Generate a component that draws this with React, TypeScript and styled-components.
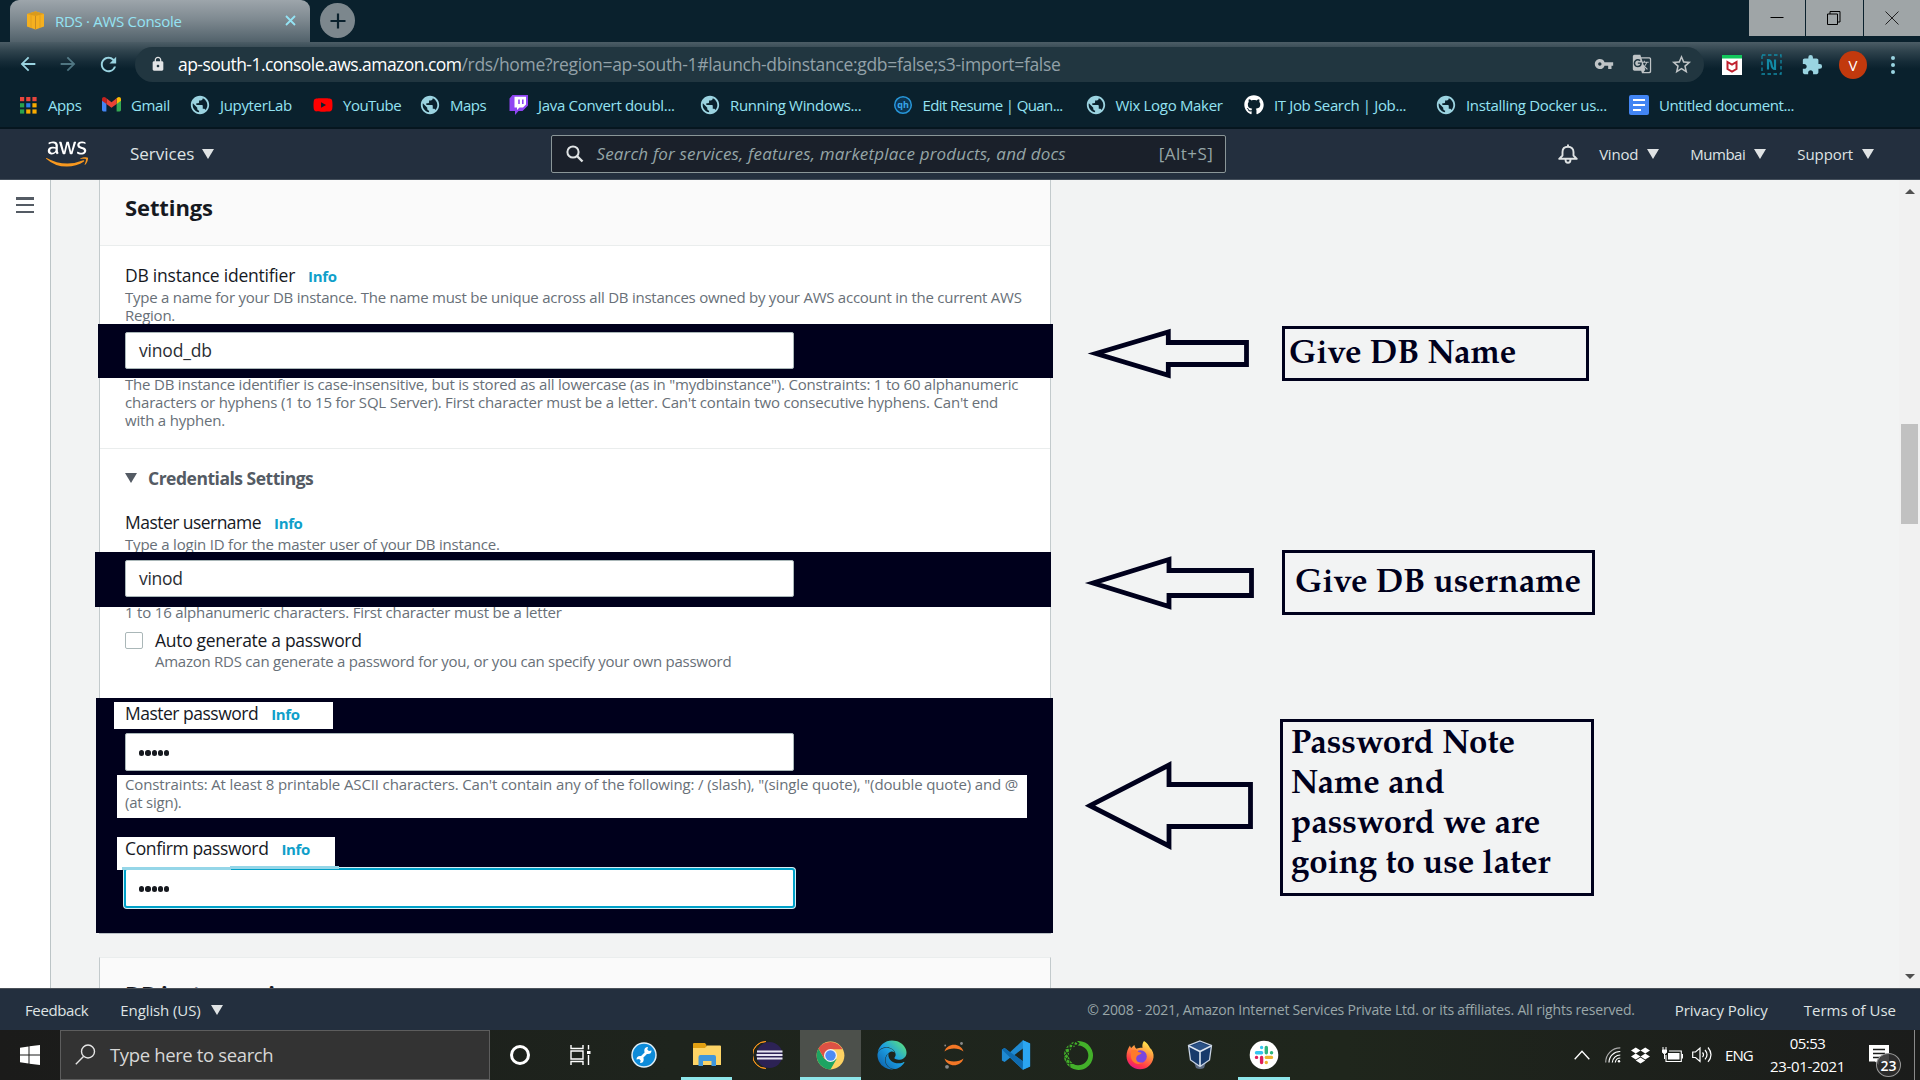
import React from "react";
import styled, { createGlobalStyle, css } from "styled-components";
import { FaAws, FaGithub, FaTwitch, FaYoutube, FaDropbox, FaEdge } from "react-icons/fa";
import { SiAnaconda } from "react-icons/si";
import {
  MdPublic, MdVpnKey, MdGTranslate, MdStarBorder, MdExtension, MdLock, MdRefresh, MdArrowBack, MdArrowForward,
} from "react-icons/md";

const INK = "#00001c";
const CYAN = "#94e3f3";

const GlobalStyle = createGlobalStyle`
  * { box-sizing: border-box; }
  body { margin: 0; overflow: hidden; }
  svg { display: block; flex: none; }
`;

const Screen = styled.div`
  width: 1920px;
  height: 1080px;
  display: flex;
  flex-direction: column;
  font-family: "Open Sans", "Noto Sans", sans-serif;
  background: #f2f3f3;
  overflow: hidden;
`;

const Txt = styled.span<{ $ls?: number; $w?: number }>`
  white-space: pre;
  letter-spacing: ${(p) => p.$ls ?? 0}px;
  ${(p) => p.$w && css`width: ${p.$w}px;`}
`;

/* ---------- browser chrome ---------- */
const TabStrip = styled.div`
  height: 42px;
  background: #0a212d;
  display: flex;
  align-items: flex-start;
  padding-left: 10px;
`;
const Tab = styled.div`
  width: 300px;
  height: 42px;
  border-radius: 9px 9px 0 0;
  background: linear-gradient(#9da5ab, #7f8a91 45%, #52626b);
  display: flex;
  align-items: center;
  padding: 0 14px 1px 16px;
  color: ${CYAN};
  font-size: 15px;
`;
const TabTitle = styled(Txt)`
  margin-left: 10px;
  flex: 1;
`;
const NewTab = styled.div`
  width: 35px;
  height: 35px;
  margin: 3px 0 0 10px;
  border-radius: 50%;
  background: #7c878d;
  display: grid;
  place-items: center;
`;
const WindowButtons = styled.div`
  margin-left: auto;
  display: flex;
  gap: 1px;
`;
const WindowButton = styled.div`
  width: 56.4px;
  height: 36px;
  background: #9fa5a7;
  display: grid;
  place-items: center;
`;
const Toolbar = styled.div`
  height: 43px;
  background: linear-gradient(#4c5d66, #2f434d 9px, #152b37 20px, #0a212d 27px);
  display: flex;
  align-items: center;
  padding: 0 0 1px 17px;
  color: #9ad4e1;
`;
const NavButton = styled.div<{ $dim?: boolean }>`
  width: 40px;
  display: flex;
  padding-top: 2px;
  opacity: ${(p) => (p.$dim ? 0.45 : 1)};
`;
const AddressBar = styled.div`
  width: 1569px;
  height: 35px;
  margin: 2px 17px 0 -2px;
  border-radius: 18px;
  background: #213640;
  display: flex;
  align-items: center;
  padding: 0 11px 0 15px;
  font-size: 17.5px;
  color: #93a1a8;
`;
const Host = styled(Txt)`
  color: #fff;
  margin-left: 12px;
  width: 283.5px;
`;
const Path = styled(Txt)`
  flex: 1;
`;
const AddressIcons = styled.div`
  display: flex;
  align-items: center;
  gap: 18px;
  color: #bfc4c6;
`;
const Extensions = styled.div`
  display: flex;
  align-items: center;
  gap: 19px;
  padding: 3px 0 0 1px;
`;
const Avatar = styled.div`
  width: 28px;
  height: 28px;
  border-radius: 50%;
  background: #c2390d;
  color: #fff;
  font-size: 15px;
  display: grid;
  place-items: center;
  margin: 0 -3px 0 -3px;
`;
const BookmarkBar = styled.div`
  height: 44px;
  background: #0a212d;
  border-bottom: 2px solid #06161f;
  display: flex;
  align-items: center;
  padding: 0 0 3px 18px;
  color: ${CYAN};
  font-size: 15px;
`;
const Bookmark = styled.div<{ $w: number }>`
  width: ${(p) => p.$w}px;
  display: grid;
  grid-template-columns: 20px auto;
  column-gap: 10px;
  align-items: center;
  justify-items: center;
  justify-content: start;
`;
const Globe = styled(MdPublic)`
  width: 22px;
  height: 22px;
  color: #9bd3e0;
`;

/* ---------- AWS header ---------- */
const AwsHeader = styled.header`
  height: 51px;
  background: #232f3e;
  border-bottom: 1px solid #444f5b;
  display: flex;
  align-items: center;
  padding: 0 46px;
  color: #dfe3e4;
`;
const AwsLogo = styled.div`
  display: grid;
  margin-right: 42px;
  > * { grid-area: 1 / 1; width: 42px; height: 34px; }
`;
const LogoWord = styled(FaAws)`
  color: #fff;
  clip-path: inset(0 0 43% 0);
`;
const LogoSmile = styled(FaAws)`
  color: #f7981f;
  clip-path: inset(57% 0 0 0);
`;
const Menu = styled.div<{ $size?: number; $gap?: number }>`
  display: flex;
  align-items: center;
  gap: ${(p) => p.$gap ?? 9}px;
  font-size: ${(p) => p.$size ?? 15}px;
`;
const ServicesMenu = styled(Menu)`
  padding-bottom: 1px;
`;
const Caret = styled.i<{ $color?: string }>`
  border: 6.5px solid transparent;
  border-top: 10.5px solid ${(p) => p.$color ?? "#dfe3e4"};
  border-bottom: 0;
`;
const SearchBox = styled.div`
  width: 675px;
  height: 38px;
  margin-left: 337px;
  border: 1px solid #8a9698;
  border-radius: 2px;
  background: #1a202a;
  color: #95a5a6;
  font-size: 17px;
  display: flex;
  align-items: center;
  padding: 0 12px 1px 14px;
`;
const Placeholder = styled(Txt)`
  font-style: italic;
  margin-left: 12px;
  flex: 1;
`;
const HeaderRight = styled.div`
  margin-left: auto;
  display: flex;
  align-items: center;
  gap: 31px;
  > :first-child { margin-right: -10px; }
`;

/* ---------- page ---------- */
const Page = styled.main`
  position: relative;
  height: 808px;
  display: flex;
  overflow: hidden;
`;
const SideRail = styled.aside`
  width: 51px;
  background: #fff;
  border-right: 1px solid #bcc4c6;
  padding: 17px 0 0 16px;
`;
const Burger = styled.div`
  width: 18px;
  height: 16px;
  display: flex;
  flex-direction: column;
  justify-content: space-between;
  > i { height: 2.5px; background: #545b64; }
`;
const Column = styled.div`
  width: 952px;
  margin-left: 48px;
`;
const Card = styled.section<{ $top?: boolean }>`
  background: #fff;
  border: 1px solid #c3cacc;
  border-top: ${(p) => (p.$top ? "1px solid #eaeded" : "0")};
  border-bottom-color: #b8bfc3;
  margin-top: ${(p) => (p.$top ? 23 : 0)}px;
`;
const CardHeader = styled.div<{ $pad: number }>`
  height: 66px;
  background: #fafafa;
  border-bottom: 1px solid #eaeded;
  padding: ${(p) => p.$pad}px 25px 0;
  font-size: 22px;
  font-weight: 700;
  line-height: 28px;
  color: #16191f;
`;
const Section = styled.div<{ $pad: number; $line?: boolean }>`
  padding: ${(p) => p.$pad}px 25px ${(p) => (p.$line ? 19 : 0)}px;
  border-bottom: ${(p) => (p.$line ? "1px solid #eaeded" : "0")};
`;
const Label = styled.div<{ $mt?: number }>`
  height: 22px;
  margin-top: ${(p) => p.$mt ?? 0}px;
  font-size: 17.5px;
  line-height: 22px;
  color: #16191f;
  display: flex;
  align-items: baseline;
`;
const Info = styled(Txt)`
  font-size: 15px;
  font-weight: 700;
  color: #0f9fca;
  margin-left: 13px;
`;
const Help = styled.div<{ $mt?: number; $ml?: number }>`
  margin: ${(p) => p.$mt ?? 2}px 0 0 ${(p) => p.$ml ?? 0}px;
  font-size: 15px;
  line-height: 18px;
  color: #687078;
  display: flex;
  flex-direction: column;
`;
const Band = styled.div<{ $l: number; $r: number; $h: number; $mt?: number }>`
  position: relative;
  height: ${(p) => p.$h}px;
  margin: ${(p) => p.$mt ?? 0}px ${(p) => -25 - p.$r}px 0 ${(p) => -25 - p.$l}px;
  padding: 8px 0 0 ${(p) => 25 + p.$l}px;
  background: ${INK};
`;
const Field = styled.div<{ $h?: number; $mt?: number }>`
  width: 669px;
  height: ${(p) => p.$h ?? 37}px;
  margin-top: ${(p) => p.$mt ?? 0}px;
  padding: 0 0 2px 13px;
  border: 1px solid #aab7b8;
  border-radius: 2px;
  background: #fff;
  color: #2b2e33;
  font-size: 17.5px;
  display: flex;
  align-items: center;
`;
const FocusedField = styled(Field)`
  width: 671px;
  margin-left: -1px;
  border: 2px solid #00a1c9;
  box-shadow: 0 0 0 1px #d5eff6;
  border-radius: 3px;
`;
const Dots = styled.div`
  display: flex;
  gap: 1px;
  padding-top: 4px;
  > i { width: 5.3px; height: 5.3px; border-radius: 50%; background: #16191f; }
`;
const Patch = styled.div<{ $w: number; $h: number; $x: number; $mt?: number }>`
  width: ${(p) => p.$w}px;
  height: ${(p) => p.$h}px;
  margin: ${(p) => p.$mt ?? 0}px 0 0 ${(p) => -p.$x}px;
  padding-left: ${(p) => p.$x}px;
  background: #fff;
`;
const Strip = styled.div<{ $x: number; $y: number }>`
  position: absolute;
  left: ${(p) => p.$x}px;
  top: ${(p) => p.$y}px;
  width: 109px;
  height: 3px;
  background: #95d6e8;
`;
const Subhead = styled.div`
  display: flex;
  align-items: center;
  gap: 11px;
  height: 22px;
  font-size: 17.5px;
  line-height: 21px;
  font-weight: 700;
  color: #545b64;
`;
const CheckRow = styled.div`
  display: flex;
  align-items: center;
  gap: 12px;
  height: 22px;
  margin-top: 8px;
  font-size: 17.5px;
  line-height: 22px;
  color: #16191f;
`;
const CheckBox = styled.div`
  width: 18px;
  height: 17px;
  border: 1px solid #aab7b8;
  border-radius: 2px;
`;

const ScrollBar = styled.div`
  width: 21px;
  height: 100%;
  margin-left: auto;
  background: #f1f1f1;
  display: flex;
  flex-direction: column;
  align-items: center;
  justify-content: space-between;
  padding: 9px 0;
`;
const Thumb = styled.div`
  width: 17px;
  height: 100px;
  margin: -220px 0 0;
  background: #c1c1c1;
`;
const ArrowUp = styled.i`
  border: 5px solid transparent;
  border-bottom-color: #505050;
  border-top: 0;
`;
const ArrowDown = styled.i`
  border: 5px solid transparent;
  border-top-color: #505050;
  border-bottom: 0;
`;

/* Hand-drawn notes that float above the page */
const ArrowLayer = styled.svg`
  position: absolute;
  left: 1051px;
  top: 0;
`;
const Note = styled.div<{ $x: number; $y: number; $w: number; $h: number; $px: number; $py: number }>`
  position: absolute;
  left: ${(p) => p.$x}px;
  top: ${(p) => p.$y}px;
  width: ${(p) => p.$w}px;
  height: ${(p) => p.$h}px;
  padding: ${(p) => p.$py}px 0 0 ${(p) => p.$px}px;
  border: 3px solid ${INK};
  color: ${INK};
  font: 700 33px/40px "TeX Gyre Pagella", "Palatino Linotype", "Liberation Serif", serif;
  white-space: pre;
`;

/* ---------- AWS footer ---------- */
const Footer = styled.footer`
  height: 42px;
  background: #232f3e;
  border-top: 1px solid #4a5058;
  display: flex;
  align-items: center;
  padding: 0 24px 0 25px;
  color: #dfe3e4;
  font-size: 15px;
`;
const Language = styled(Menu)`
  margin-left: 32px;
`;
const Copyright = styled(Txt)`
  margin-left: auto;
  margin-right: 40px;
  font-size: 14px;
  color: #9aa7a9;
`;
const Terms = styled(Txt)`
  margin-left: 36px;
`;

/* ---------- taskbar ---------- */
const Taskbar = styled.div`
  height: 50px;
  display: flex;
  color: #fff;
  background: linear-gradient(90deg, #1b1b1a, #1e241d 35%, #1f261c 70%, #1b1c1b);
`;
const TaskCell = styled.div<{ $w?: number; $active?: boolean }>`
  width: ${(p) => p.$w ?? 62}px;
  display: grid;
  place-items: center;
  background: ${(p) => (p.$active ? "#4c504b" : "transparent")};
`;
const RunningCell = styled(TaskCell)<{ $inset: number }>`
  background-image: linear-gradient(#8ee6ea, #8ee6ea);
  background-size: calc(100% - ${(p) => p.$inset * 2}px) 3px;
  background-position: center bottom;
  background-repeat: no-repeat;
  background-color: ${(p) => (p.$active ? "#4c504b" : "transparent")};
`;
const TaskSearch = styled.div`
  width: 430px;
  background: #333;
  border: 1px solid #5d5d5d;
  display: flex;
  align-items: center;
  gap: 14px;
  padding: 0 0 2px 14px;
  font-size: 18.5px;
  color: #d7d7d7;
`;
const Cortana = styled.div`
  width: 20px;
  height: 20px;
  border: 3px solid #fff;
  border-radius: 50%;
`;
const Tray = styled.div`
  margin-left: auto;
  display: flex;
  align-items: center;
  font-size: 15px;
`;
const TrayCell = styled.div<{ $w: number }>`
  width: ${(p) => p.$w}px;
  display: flex;
`;
const Clock = styled.div`
  width: 75px;
  height: 50px;
  display: flex;
  flex-direction: column;
  align-items: center;
  line-height: 23px;
  padding-top: 2px;
`;
const Notice = styled.div`
  position: relative;
  width: 45px;
  height: 50px;
  margin-left: 24px;
  padding-top: 15px;
`;
const Badge = styled.div`
  position: absolute;
  left: 7px;
  top: 23px;
  width: 25px;
  height: 24px;
  border: 1.5px solid #9a9a9a;
  border-radius: 50%;
  background: rgba(45, 45, 45, 0.88);
  display: grid;
  place-items: center;
  font-size: 14px;
  font-weight: 600;
`;
const PeekLine = styled.div`
  width: 6px;
  height: 50px;
  border-left: 1px solid #8a8a8a;
`;

const EdgeIcon = styled(FaEdge)`
  width: 30px;
  height: 30px;
  path { fill: url(#edgeFill); }
`;

const AppsGrid = () => (
  <svg width="18" height="18" viewBox="0 0 18 18">
    {["#e8453c", "#e8453c", "#e8453c", "#2ba24c", "#2b7de9", "#f9ab00", "#2ba24c", "#f9ab00", "#f9ab00"].map((c, i) => (
      <rect key={i} x={1 + (i % 3) * 6.2} y={1 + Math.floor(i / 3) * 6.2} width="4.2" height="4.2" fill={c} />
    ))}
  </svg>
);
const Gmail = () => (
  <svg width="19" height="15" viewBox="0 0 19 15">
    <path d="M0 2.5V13a1.4 1.4 0 0 0 1.4 1.4H4.4V6z" fill="#4285f4" />
    <path d="M19 2.5V13a1.4 1.4 0 0 1-1.4 1.4H14.6V6z" fill="#34a853" />
    <path d="M14.6 1.5V7L19 3.7V2.2C19 .4 17-.6 15.5.6z" fill="#fbbc04" />
    <path d="M4.4 7V1.3l5.1 3.9 5.1-3.9V7L9.5 10.8z" fill="#ea4335" />
    <path d="M0 2.2V3.7L4.4 7V1.3L3.5.6C2-.6 0 .4 0 2.2z" fill="#c5221f" />
  </svg>
);
const Cube = () => (
  <svg width="19" height="19" viewBox="0 0 19 19">
    <path d="M9.5.3 18 3v12.5L9.5 18.6 1 15.500V3z" fill="#f5b01f" />
    <path d="M1.200 3 9.500 5 17.800 3 9.500.4z" fill="#d99a1c" />
    <path d="M9.500 5V18.600" stroke="#c98a20" strokeWidth="1" />
    <path d="M5 4V17M14 4V17" stroke="#dc9c20" strokeWidth=".8" />
  </svg>
);
const Quan = () => (
  <svg width="20" height="20" viewBox="0 0 20 20">
    <circle cx="10" cy="10" r="8.300" fill="#0c3552" stroke="#2796d8" strokeWidth="1.500" />
    <text x="10" y="13" fontSize="9" fontWeight="700" textAnchor="middle" fill="#38a8ea" fontFamily="Open Sans">qh</text>
  </svg>
);
const Twitch = () => (
  <svg width="19" height="20" viewBox="0 0 19 20">
    <path d="M3.500 0H19V10.500L13.500 16H9.500L6 20V16H0.500V3.500z" fill="#8f45f2" />
    <path d="M5.500 1.800H17V9.500L14 12.500H10.500L8 15V12.500H5.500z" fill="#fff" />
    <path d="M10 4.500V9M13.800 4.500V9" stroke="#8f45f2" strokeWidth="1.600" />
  </svg>
);
const DocIcon = () => (
  <svg width="20" height="20" viewBox="0 0 20 20">
    <rect width="20" height="20" rx="2" fill="#4285f4" />
    <path d="M4 5h12M4 10h12M4 15h8" stroke="#fff" strokeWidth="2.200" />
  </svg>
);
const Chrome = () => (
  <svg width="29" height="29" viewBox="0 0 48 48">
    <circle cx="24" cy="24" r="23" fill="#fdd262" />
    <path d="M4.100 12.500A23 23 0 0 0 24 47L34 29.800 24 24 14 29.800z" fill="#1da462" />
    <path d="M24 13.500H43.900a23 23 0 0 0-39.800-1L14 29.800z" fill="#dd5144" />
    <circle cx="24" cy="24" r="10.800" fill="#f1f1f1" />
    <circle cx="24" cy="24" r="8.600" fill="#4c8bf5" />
  </svg>
);
const Explorer = () => (
  <svg width="28" height="24" viewBox="0 0 28 24">
    <path d="M0 1a1 1 0 0 1 1-1H12l1.500 2V8H0z" fill="#e2a012" />
    <path d="M0 5H12l2-2.500H27a1 1 0 0 1 1 1V22H0z" fill="#fdd466" />
    <path d="M5.500 23V14a2 2 0 0 1 2-2h13.500a2 2 0 0 1 2 2V23H18.500V18H10V23z" fill="#3f97dc" />
  </svg>
);
const Eclipse = () => (
  <svg width="30" height="28" viewBox="0 0 30 28">
    <path d="M13 .500A13.500 13.500 0 0 0 13 27.500A13.500 13.500 0 0 1 13 .500z" fill="#f7941e" stroke="#f7941e" />
    <circle cx="16.500" cy="14" r="13" fill="#2c2255" />
    <path d="M4 10.500H29.500M3.500 14H29.500M4 17.500H29.500" stroke="#e8e6f2" strokeWidth="2" />
  </svg>
);
const Wrench = () => (
  <svg width="26" height="26" viewBox="0 0 26 26">
    <circle cx="13" cy="13" r="12" fill="#0d8bd9" stroke="#dfeef7" strokeWidth="1.500" />
    <path d="M9.500 16.500 16.500 9.500" stroke="#fff" strokeWidth="2.600" />
    <path d="M20.500 8.500a3.600 3.600 0 1 1-3.500-3.600L16.300 7.500l1.600 1.600zM5.500 17.500a3.600 3.600 0 1 1 3.500 3.600l.700-2.600-1.600-1.600z" fill="#fff" />
  </svg>
);
const Jupyter = () => (
  <svg width="22" height="28" viewBox="0 0 22 28">
    <path d="M1.500 10.500C4 1.500 18 1.500 20.500 10.500 16 6.500 6 6.500 1.500 10.500z" fill="#f37726" />
    <path d="M1.500 17.500C4 26.500 18 26.500 20.500 17.500 16 21.500 6 21.500 1.500 17.500z" fill="#f37726" />
    <circle cx="18.500" cy="2.500" r="1.400" fill="#8a8a8a" />
    <circle cx="2.200" cy="4.500" r="0.900" fill="#8a8a8a" />
    <circle cx="4" cy="25.800" r="1.900" fill="#8a8a8a" />
  </svg>
);
const VsCode = () => (
  <svg width="30" height="30" viewBox="0 0 100 100">
    <path d="M73 1 97 12V88L73 99 30 59 12 73 3 68V32L12 27 30 41zM73 28 45 50 73 72z" fill="#1f8ad2" fillRule="evenodd" />
    <path d="M12 27 3 32 72 98 75 72z" fill="#0f6bb0" />
    <path d="M73 1 97 12V88L73 99z" fill="#2ba6f2" />
  </svg>
);
const Firefox = () => (
  <svg width="30" height="30" viewBox="0 0 30 30">
    <path d="M19 1C22 3 24 5.500 25 8 27.500 10 29 14 28.500 17.500 27.500 24.500 22 29.300 15 29.300 7.500 29.300 1.500 23.500 1.500 16 1.500 12 3 8 5 5.500 5.200 6.800 5.600 7.500 6.300 8 7.500 6.500 8.500 5.500 9.500 5 9.500 6.500 10.200 7.800 11.500 8.800 14 8 16.500 7.500 17.500 8 17 5 17.500 3 19 1z" fill="url(#foxFill)" />
    <circle cx="15.500" cy="16.500" r="6.300" fill="#7a46e0" />
    <path d="M6 10.500C9 9 12 10 13.500 12 15 12.500 16 12.300 16.500 13 15.500 15 12.500 14.500 11.500 17 10 21 14 23.500 17.500 22.500 13 26 6.500 22.500 6 17z" fill="#ff7a2b" />
  </svg>
);
const VBox = () => (
  <svg width="26" height="30" viewBox="0 0 26 30">
    <path d="M7 22h12l-2 6q-4 2-8 0z" fill="#5c6a80" />
    <path d="M13 1 24.500 5.500 22.500 20 13 26.500 3.500 20 1.500 5.500z" fill="#173a6b" stroke="#c9d4e4" strokeWidth="1.300" />
    <path d="M13 2.500 22 6 13 10.500 4 6z" fill="#2b5286" />
    <path d="M2 6 13 11.500 24 6M13 11.500V26" stroke="#dde6f1" strokeWidth="1.600" fill="none" />
  </svg>
);
const Slack = () => (
  <svg width="30" height="30" viewBox="0 0 30 30">
    <circle cx="15" cy="15" r="14.300" fill="#fff" />
    <g strokeWidth="3.400" strokeLinecap="round">
      <path d="M12.600 7.500V7.600M7.500 12.700H12.600" stroke="#36c5f0" />
      <path d="M17.300 7.500V12.700M22.500 12.700H22.600" stroke="#2eb67d" />
      <path d="M17.300 22.600V22.500M17.300 17.400H22.500" stroke="#ecb22e" />
      <path d="M12.600 17.400V22.600M7.500 17.400H7.600" stroke="#e01e5a" />
    </g>
  </svg>
);

const bookmarks: { w: number; t: string; ls: number; icon: React.ReactNode }[] = [
  { w: 83, t: "Apps", ls: -0.4, icon: <AppsGrid /> },
  { w: 89, t: "Gmail", ls: -0.35, icon: <Gmail /> },
  { w: 123, t: "JupyterLab", ls: -0.34, icon: <Globe /> },
  { w: 107, t: "YouTube", ls: -0.5, icon: <FaYoutube size={20} color="#f00" /> },
  { w: 88, t: "Maps", ls: -0.5, icon: <Globe /> },
  { w: 192, t: "Java Convert doubl...", ls: -0.311, icon: <Twitch /> },
  { w: 192.500, t: "Running Windows...", ls: -0.345, icon: <Globe /> },
  { w: 193, t: "Edit Resume | Quan...", ls: -0.62, icon: <Quan /> },
  { w: 158.500, t: "Wix Logo Maker", ls: -0.32, icon: <Globe /> },
  { w: 192, t: "IT Job Search | Job...", ls: -0.36, icon: <FaGithub size={20} color="#fff" /> },
  { w: 193, t: "Installing Docker us...", ls: -0.33, icon: <Globe /> },
  { w: 180, t: "Untitled document...", ls: -0.408, icon: <DocIcon /> },
];

const Gradients = () => (
  <svg width="0" height="0">
    <defs>
      <linearGradient id="edgeFill" x1="0" y1="1" x2="1" y2="0">
        <stop offset="0" stopColor="#0c59a4" /><stop offset=".5" stopColor="#1b9de2" /><stop offset="1" stopColor="#66eb6e" />
      </linearGradient>
      <linearGradient id="foxFill" x1="0.800" y1="0" x2="0.300" y2="1">
        <stop offset="0" stopColor="#fff44f" /><stop offset=".4" stopColor="#ff9640" /><stop offset=".8" stopColor="#ff3647" /><stop offset="1" stopColor="#e31587" />
      </linearGradient>
    </defs>
  </svg>
);

const PasswordDots = () => <Dots><i /><i /><i /><i /><i /></Dots>;

export default function App() {
  return (
    <Screen>
      <GlobalStyle />
      <TabStrip>
        <Tab>
          <Cube />
          <TabTitle $ls={-0.3}>RDS · AWS Console</TabTitle>
          <svg width="11" height="11" viewBox="0 0 11 11"><path d="M1 1 10 10M10 1 1 10" stroke={CYAN} strokeWidth="1.800" /></svg>
        </Tab>
        <NewTab>
          <svg width="16" height="16" viewBox="0 0 16 16"><path d="M8 .500V15.500M.500 8H15.500" stroke="#0a212d" strokeWidth="2.200" /></svg>
        </NewTab>
        <WindowButtons>
          <WindowButton><svg width="14" height="12" viewBox="0 0 14 12"><path d="M.500 5.500H13.500" stroke="#000" /></svg></WindowButton>
          <WindowButton><svg width="14" height="14" viewBox="0 0 14 14"><path d="M.500 3H10.500V13.500H.500zM3 3V.500H13V11H10.500" stroke="#000" fill="none" /></svg></WindowButton>
          <WindowButton><svg width="14" height="14" viewBox="0 0 14 14"><path d="M.500.500 13.500 13.500M13.500.500.500 13.500" stroke="#222" /></svg></WindowButton>
        </WindowButtons>
      </TabStrip>
      <Toolbar>
        <NavButton><MdArrowBack size={22} /></NavButton>
        <NavButton $dim><MdArrowForward size={22} /></NavButton>
        <NavButton><MdRefresh size={23} /></NavButton>
        <AddressBar>
          <MdLock size={16} color="#e3e5e6" />
          <Host $ls={-0.538}>ap-south-1.console.aws.amazon.com</Host>
          <Path $ls={-0.317}>/rds/home?region=ap-south-1#launch-dbinstance:gdb=false;s3-import=false</Path>
          <AddressIcons>
            <MdVpnKey size={20} />
            <MdGTranslate size={20} />
            <MdStarBorder size={23} />
          </AddressIcons>
        </AddressBar>
        <Extensions>
          <svg width="20" height="20" viewBox="0 0 20 20">
            <rect width="20" height="20" fill="#fff" /><rect width="20" height="3.500" fill="#12c75c" />
            <path d="M5.500 7 10 9.500 14.500 7V14L10 16.500 5.500 14z" fill="none" stroke="#c0202e" strokeWidth="2" />
          </svg>
          <svg width="21" height="21" viewBox="0 0 21 21">
            <rect x="1" y="1" width="19" height="19" fill="none" stroke="#128aa5" strokeWidth="1.300" strokeDasharray="3.500 2.500" />
            <path d="M7 15.500V6q3 0 3.500 4.500T14 15V5.500" fill="none" stroke="#128aa5" strokeWidth="2.200" />
          </svg>
          <MdExtension size={22} />
          <Avatar>V</Avatar>
          <svg width="20" height="18" viewBox="0 0 20 18"><circle cx="10" cy="2" r="2" fill="#9ad4e1" /><circle cx="10" cy="9" r="2" fill="#9ad4e1" /><circle cx="10" cy="16" r="2" fill="#9ad4e1" /></svg>
        </Extensions>
      </Toolbar>
      <BookmarkBar>
        {bookmarks.map((b) => (
          <Bookmark key={b.t} $w={b.w}>{b.icon}<Txt $ls={b.ls}>{b.t}</Txt></Bookmark>
        ))}
      </BookmarkBar>

      <AwsHeader>
        <AwsLogo><LogoWord /><LogoSmile /></AwsLogo>
        <ServicesMenu $size={17} $gap={8}><Txt>Services</Txt><Caret /></ServicesMenu>
        <SearchBox>
          <svg width="18" height="18" viewBox="0 0 18 18"><circle cx="7" cy="7" r="5.600" fill="none" stroke="#dfe3e4" strokeWidth="2" /><path d="M11 11 16.500 16.500" stroke="#dfe3e4" strokeWidth="2.400" /></svg>
          <Placeholder $ls={0.173}>Search for services, features, marketplace products, and docs</Placeholder>
          <Txt $ls={0.5}>[Alt+S]</Txt>
        </SearchBox>
        <HeaderRight>
          <svg width="20" height="20" viewBox="0 0 20 20"><path d="M1.200 14.800H18.800L15.500 11.500V8C15.500 5 13.500 2.800 10 2.800S4.500 5 4.500 8V11.500zM10 2.800V.500M7.500 15.500q0 3.300 2.500 3.300t2.500-3.300" fill="none" stroke="#dfe3e4" strokeWidth="1.900" strokeLinejoin="round" /></svg>
          <Menu><Txt $ls={-0.2}>Vinod</Txt><Caret /></Menu>
          <Menu><Txt $ls={-0.48}>Mumbai</Txt><Caret /></Menu>
          <Menu><Txt $ls={-0.08}>Support</Txt><Caret /></Menu>
        </HeaderRight>
      </AwsHeader>

      <Page>
        <SideRail><Burger><i /><i /><i /></Burger></SideRail>
        <Column>
          <Card>
            <CardHeader $pad={13}><Txt $ls={-0.1}>Settings</Txt></CardHeader>
            <Section $pad={18} $line>
              <Label><Txt $ls={-0.23}>DB instance identifier</Txt><Info $ls={-0.35}>Info</Info></Label>
              <Help>
                <Txt $ls={-0.245}>Type a name for your DB instance. The name must be unique across all DB instances owned by your AWS account in the current AWS</Txt>
                <Txt $ls={-0.25}>Region.</Txt>
              </Help>
              <Band $l={2} $r={3} $h={54}><Field><Txt $ls={-0.176}>vinod_db</Txt></Field></Band>
              <Help $mt={-3}>
                <Txt $ls={-0.2}>The DB instance identifier is case-insensitive, but is stored as all lowercase (as in "mydbinstance"). Constraints: 1 to 60 alphanumeric</Txt>
                <Txt $ls={-0.188}>characters or hyphens (1 to 15 for SQL Server). First character must be a letter. Can't contain two consecutive hyphens. Can't end</Txt>
                <Txt $ls={-0.2}>with a hyphen.</Txt>
              </Help>
            </Section>
            <Section $pad={18}>
              <Subhead><Caret $color="#545b64" /><Txt $ls={-0.487}>Credentials Settings</Txt></Subhead>
              <Label $mt={22}><Txt $ls={-0.54}>Master username</Txt><Info $ls={-0.35}>Info</Info></Label>
              <Help><Txt $ls={-0.2}>Type a login ID for the master user of your DB instance.</Txt></Help>
              <Band $l={5} $r={1} $h={55} $mt={-1}><Field><Txt $ls={-0.3}>vinod</Txt></Field></Band>
              <Help $mt={-4}><Txt $ls={-0.18}>1 to 16 alphanumeric characters. First character must be a letter</Txt></Help>
              <CheckRow><CheckBox /><Txt $ls={-0.3}>Auto generate a password</Txt></CheckRow>
              <Help $mt={1} $ml={30}><Txt $ls={-0.25}>Amazon RDS can generate a password for you, or you can specify your own password</Txt></Help>
              <Band $l={4} $r={3} $h={235} $mt={28}>
                <Patch $w={219} $h={27} $x={11} $mt={-4}>
                  <Label><Txt $ls={-0.5}>Master password</Txt><Info $ls={-0.35}>Info</Info></Label>
                </Patch>
                <Field $h={38} $mt={4}><PasswordDots /></Field>
                <Patch $w={910} $h={43} $x={8} $mt={4}>
                  <Help>
                    <Txt $ls={-0.13}>Constraints: At least 8 printable ASCII characters. Can't contain any of the following: / (slash), "(single quote), "(double quote) and @</Txt>
                    <Txt $ls={-0.22}>(at sign).</Txt>
                  </Help>
                </Patch>
                <Patch $w={218} $h={33} $x={8} $mt={19}>
                  <Label><Txt $ls={-0.38}>Confirm password</Txt><Info $ls={-0.35}>Info</Info></Label>
                </Patch>
                <FocusedField $h={40} $mt={-2}><PasswordDots /></FocusedField>
                <Strip $x={26} $y={169} />
                <Strip $x={134} $y={168} />
              </Band>
            </Section>
          </Card>
          <Card $top><CardHeader $pad={21}><Txt $ls={-0.3}>DB instance size</Txt></CardHeader></Card>
        </Column>
        <ScrollBar><ArrowUp /><Thumb /><ArrowDown /></ScrollBar>

        <ArrowLayer width="220" height="808" viewBox="1051 180 220 808" fill="none" stroke={INK} strokeWidth="4.800">
          <path d="M1096 353.500 1168.300 332V342.500H1246.500V364.500H1168.300V375.200z" />
          <path d="M1093 583 1169 559.500V570.500H1251.500V595.500H1169V606.500z" />
          <path d="M1090 805.700 1169 765V784.500H1250.500V826.500H1169V846z" />
        </ArrowLayer>
        <Note $x={1282} $y={146} $w={307} $h={55} $px={4} $py={7}>Give DB Name</Note>
        <Note $x={1282} $y={370} $w={313} $h={65} $px={10} $py={12}>Give DB username</Note>
        <Note $x={1280} $y={539} $w={314} $h={177} $px={8} $py={4}>{"Password Note\nName and\npassword we are\ngoing to use later"}</Note>
      </Page>

      <Footer>
        <Txt $ls={-0.38}>Feedback</Txt>
        <Language $gap={10}><Txt $ls={-0.1}>English (US)</Txt><Caret /></Language>
        <Copyright $ls={-0.195}>© 2008 - 2021, Amazon Internet Services Private Ltd. or its affiliates. All rights reserved.</Copyright>
        <Txt $ls={-0.05}>Privacy Policy</Txt>
        <Terms>Terms of Use</Terms>
      </Footer>

      <Taskbar>
        <TaskCell $w={60}>
          <svg width="20" height="20" viewBox="0 0 20 20" fill="#fff"><path d="M0 2.800 8.500 1.500V9.500H0zM9.500 1.300 20 0V9.500H9.500zM0 10.500H8.500V18.500L0 17.200zM9.500 10.500H20V20L9.500 18.700z" /></svg>
        </TaskCell>
        <TaskSearch>
          <svg width="21" height="21" viewBox="0 0 21 21"><circle cx="13" cy="7.500" r="6.500" fill="none" stroke="#e6e6e6" strokeWidth="1.400" /><path d="M8.500 12.500 .800 20.200" stroke="#e6e6e6" strokeWidth="1.400" /></svg>
          <Txt $ls={-0.365}>Type here to search</Txt>
        </TaskSearch>
        <TaskCell $w={60}><Cortana /></TaskCell>
        <TaskCell $w={60}>
          <svg width="21" height="20" viewBox="0 0 21 20" fill="none" stroke="#fff" strokeWidth="1.400"><path d="M1 0V3.500H13V0M1 6H13V14H1zM1 20V16.500H13V20M18.500 0V4.500M18.500 10V20" /><path d="M17 7.500H20.500" strokeWidth="3" /></svg>
        </TaskCell>
        <TaskCell $w={68}><Wrench /></TaskCell>
        <RunningCell $w={57} $inset={3}><Explorer /></RunningCell>
        <TaskCell $w={65}><Eclipse /></TaskCell>
        <RunningCell $w={61} $inset={0} $active><Chrome /></RunningCell>
        <TaskCell><EdgeIcon /></TaskCell>
        <TaskCell><Jupyter /></TaskCell>
        <TaskCell><VsCode /></TaskCell>
        <TaskCell><SiAnaconda size={29} color="#43b02a" /></TaskCell>
        <TaskCell><Firefox /></TaskCell>
        <TaskCell $w={58}><VBox /></TaskCell>
        <RunningCell $w={70} $inset={9}><Slack /></RunningCell>
        <Tray>
          <TrayCell $w={31}><svg width="16" height="10" viewBox="0 0 16 10"><path d="M.700 9.300 8 1.200 15.300 9.300" fill="none" stroke="#fff" strokeWidth="1.300" /></svg></TrayCell>
          <TrayCell $w={26}>
            <svg width="16" height="16" viewBox="0 0 16 16" fill="none" stroke="#fff" strokeWidth="1.200"><path d="M.700 15.500A14.500 14.500 0 0 1 15.300.900" stroke="#aaa" /><path d="M4 15.500A11 11 0 0 1 15.300 4.500M7.300 15.500A8 8 0 0 1 15.300 8M10.300 15.500A5 5 0 0 1 15.300 11" /><circle cx="14" cy="14.200" r="1.200" fill="#fff" stroke="none" /></svg>
          </TrayCell>
          <TrayCell $w={31}><FaDropbox size={19} /></TrayCell>
          <TrayCell $w={30}>
            <svg width="21" height="16" viewBox="0 0 21 16"><rect x="6" y="6" width="11.500" height="6.500" fill="#fff" /><path d="M4 8V14.500H19.300V4H7M20.500 7V11.500" fill="none" stroke="#fff" strokeWidth="1.100" /><path d="M.500 3H4.500V5.500L2.500 7 .500 5.500zM1 0V3M4 0V3M2.500 7V12" stroke="#fff" fill="#fff" strokeWidth="1" /></svg>
          </TrayCell>
          <TrayCell $w={33}>
            <svg width="21" height="18" viewBox="0 0 21 18" fill="none" stroke="#fff" strokeWidth="1.200"><path d="M.700 6H3.500L8 2V15.500L3.500 11.500H.700zM10.500 6.500q2 2.300 0 4.600M13 4q4 4.700 0 9.400M16 1.500q6 7.200 0 14.400" /></svg>
          </TrayCell>
          <TrayCell $w={45}><Txt $ls={-0.9}>ENG</Txt></TrayCell>
          <Clock><Txt $ls={-0.5}>05:53</Txt><Txt $ls={-0.327}>23-01-2021</Txt></Clock>
          <Notice>
            <svg width="20" height="20" viewBox="0 0 20 20"><path d="M0 0H20V16.500H10V20L6 16.500H0z" fill="#fff" /><path d="M4 4.500H16M4 8.500H16M4 12.500H12" stroke="#1b1c1b" strokeWidth="1.300" /></svg>
            <Badge>23</Badge>
          </Notice>
          <PeekLine />
        </Tray>
      </Taskbar>
      <Gradients />
    </Screen>
  );
}
